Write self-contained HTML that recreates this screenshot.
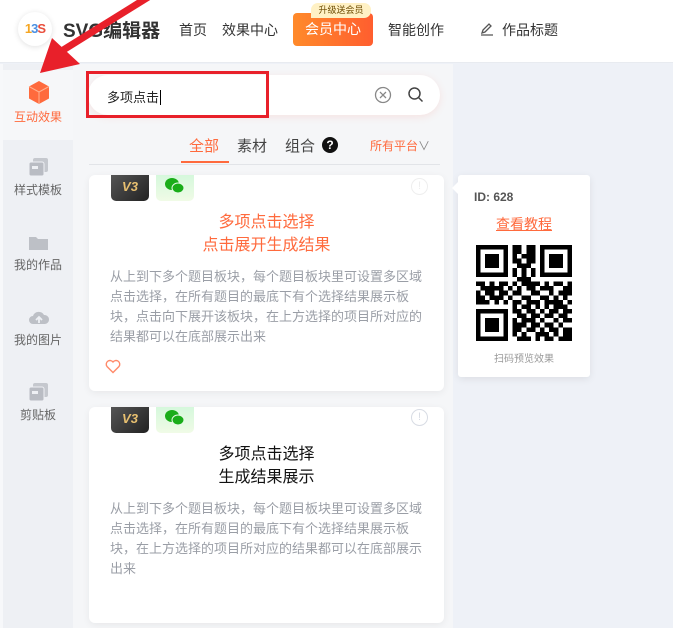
<!DOCTYPE html>
<html><head><meta charset="utf-8"><style>
*{margin:0;padding:0;box-sizing:border-box}
body{width:673px;height:628px;overflow:hidden;position:relative;background:#eef1f7;font-family:"Liberation Sans","Noto Sans CJK SC",sans-serif;}
.a{position:absolute}
.hdr{left:0;top:0;width:673px;height:63px;background:#fff;border-bottom:1px solid #e8ebf0}
.nav{top:20px;font-size:14px;color:#333}
.side{left:0;top:64px;width:73px;height:564px;background:#eef0f4;border-left:3px solid #f7f8fa}
.si{width:70px;text-align:center;font-size:12px;color:#666}
.panel{left:73px;top:64px;width:380px;height:564px;background:#f5f6f8}
.card{background:#fff;border-radius:6px;box-shadow:0 2px 8px rgba(0,0,0,.06)}
.desc{font-size:13px;line-height:20px;color:#9a9ea6;width:320px;letter-spacing:0}
</style></head><body>
<div class="a hdr"></div>
<div class="a" style="left:18px;top:12px;width:34px;height:34px;border-radius:50%;background:#fff;box-shadow:0 1px 6px rgba(0,0,0,.12);font-size:13px;font-weight:bold;line-height:34px;text-align:center;letter-spacing:-1px"><span style="color:#f5a623">1</span><span style="color:#4a90e2">3</span><span style="color:#e94e3c">S</span></div>
<div class="a" style="left:63px;top:16px;font-size:19px;font-weight:bold;color:#333">SVG编辑器</div>
<div class="a nav" style="left:179px">首页</div>
<div class="a nav" style="left:222px">效果中心</div>
<div class="a" style="left:293px;top:13px;width:80px;height:33px;border-radius:4px;background:linear-gradient(90deg,#ff8a2a,#ff5e2f);color:#fff;font-size:14px;text-align:center;line-height:33px">会员中心</div>
<div class="a" style="left:311px;top:3px;width:60px;height:15px;border-radius:7px 7px 7px 0;background:#fff1c4;color:#6b4a00;font-size:9px;text-align:center;line-height:15px">升级送会员</div>
<div class="a nav" style="left:388px">智能创作</div>
<svg class="a" style="left:479px;top:21px" width="16" height="16" viewBox="0 0 16 16"><path d="M3 12l1-3 6-6 2 2-6 6z M2 14h12" fill="none" stroke="#555" stroke-width="1.3"/></svg>
<div class="a nav" style="left:502px">作品标题</div>

<div class="a side"></div>
<div class="a" style="left:3px;top:70px;width:70px;height:70px;background:#f6f7f9"></div>
<svg class="a" style="left:27px;top:80px" width="24" height="26" viewBox="0 0 24 26"><path d="M12 1l10 5.5v12L12 24 2 18.5v-12z" fill="#ff6a3d"/><path d="M2 6.5L12 12l10-5.5M12 12v12" fill="none" stroke="#ffb08f" stroke-width="1"/></svg>
<div class="a si" style="left:3px;top:108px;color:#ff6a3d">互动效果</div>
<svg class="a" style="left:28px;top:157px" width="22" height="22"><rect x="5" y="1" width="15" height="14" rx="2" fill="#c5c8ce"/><rect x="1" y="5" width="15" height="14" rx="2" fill="#b9bcc3" stroke="#eef0f4"/><rect x="4" y="9" width="6" height="3" fill="#eef0f4"/></svg>
<div class="a si" style="left:3px;top:181px">样式模板</div>
<svg class="a" style="left:28px;top:234px" width="22" height="18"><path d="M1 3h7l2 2h10v11H1z" fill="#bdc0c6"/></svg>
<div class="a si" style="left:3px;top:256px">我的作品</div>
<svg class="a" style="left:28px;top:308px" width="22" height="18"><path d="M5 16a4 4 0 010-8 6 6 0 0111-1 4.5 4.5 0 011 9z" fill="#bdc0c6"/><path d="M11 15V9m-3 3l3-3 3 3" stroke="#eef0f4" stroke-width="1.8" fill="none"/></svg>
<div class="a si" style="left:3px;top:331px">我的图片</div>
<svg class="a" style="left:28px;top:382px" width="22" height="22"><rect x="5" y="1" width="15" height="14" rx="2" fill="#c5c8ce"/><rect x="1" y="5" width="15" height="14" rx="2" fill="#b9bcc3" stroke="#eef0f4"/><rect x="4" y="9" width="6" height="3" fill="#eef0f4"/></svg>
<div class="a si" style="left:3px;top:406px">剪贴板</div>

<div class="a panel"></div>
<div class="a" style="left:88px;top:75px;width:352px;height:40px;border-radius:20px;background:#fff;box-shadow:0 2px 8px rgba(255,120,100,.15)"></div>
<div class="a" style="left:86px;top:71px;width:183px;height:47px;border:3px solid #e8202a"></div>
<div class="a" style="left:107px;top:87px;font-size:13px;color:#222">多项点击<span style="border-left:1px solid #000;margin-left:1px"></span></div>
<svg class="a" style="left:374px;top:86px" width="18" height="18"><circle cx="9" cy="9" r="7.5" fill="none" stroke="#888" stroke-width="1.3"/><path d="M6 6l6 6M12 6l-6 6" stroke="#888" stroke-width="1.3"/></svg>
<svg class="a" style="left:407px;top:86px" width="18" height="18"><circle cx="7.5" cy="7.5" r="5.5" fill="none" stroke="#444" stroke-width="1.5"/><path d="M11.5 11.5l4 4" stroke="#444" stroke-width="1.5"/></svg>
<div class="a" style="left:189px;top:135px;font-size:15px;color:#ff6a3d">全部</div>
<div class="a" style="left:181px;top:161px;width:48px;height:2px;background:#ff6a3d"></div>
<div class="a" style="left:237px;top:135px;font-size:15px;color:#444">素材</div>
<div class="a" style="left:285px;top:135px;font-size:15px;color:#444">组合</div>
<div class="a" style="left:322px;top:137px;width:16px;height:16px;border-radius:50%;background:#111;color:#fff;font-size:12px;font-weight:bold;text-align:center;line-height:16px">?</div>
<div class="a" style="left:370px;top:137px;font-size:12px;color:#ff6a3d">所有平台<span style="color:#888">∨</span></div>
<div class="a" style="left:89px;top:164px;width:351px;height:1px;background:#e2e4e8"></div>

<div class="a card" style="left:89px;top:175px;width:355px;height:216px"></div>
<div class="a card" style="left:89px;top:407px;width:355px;height:216px"></div>

<div class="a" style="left:111px;top:175px;width:38px;height:26px;border-radius:0 0 5px 5px;background:linear-gradient(135deg,#555,#222);color:#e8c070;font-weight:bold;font-style:italic;font-size:13px;text-align:center;line-height:24px">V3</div>
<div class="a" style="left:156px;top:175px;width:38px;height:26px;border-radius:0 0 5px 5px;background:linear-gradient(#d5f8dc,#f0fbe6);text-align:center"><svg width="26" height="22" viewBox="0 0 26 22"><ellipse cx="10" cy="9" rx="7" ry="6" fill="#1aad19"/><ellipse cx="16" cy="13" rx="6" ry="5" fill="#1aad19" stroke="#e6fae6"/></svg></div>
<div class="a" style="left:411px;top:178px;width:17px;height:17px;border-radius:50%;border:1.5px solid #eee;color:#eee;font-size:11px;text-align:center;line-height:14px">!</div>
<div class="a" style="left:89px;top:211px;width:355px;text-align:center;font-size:16px;line-height:23px;color:#ff6a3d">多项点击选择<br>点击展开生成结果</div>
<div class="a desc" style="left:110px;top:267px">从上到下多个题目板块，每个题目板块里可设置多区域点击选择，在所有题目的最底下有个选择结果展示板块，点击向下展开该板块，在上方选择的项目所对应的结果都可以在底部展示出来</div>
<svg class="a" style="left:105px;top:359px" width="16" height="15" viewBox="0 0 16 15"><path d="M8 13.5L2 7.5A3.3 3.3 0 018 3a3.3 3.3 0 016 4.5z" fill="none" stroke="#ff8a6a" stroke-width="1.4"/></svg>

<div class="a" style="left:111px;top:407px;width:38px;height:26px;border-radius:0 0 5px 5px;background:linear-gradient(135deg,#555,#222);color:#e8c070;font-weight:bold;font-style:italic;font-size:13px;text-align:center;line-height:24px">V3</div>
<div class="a" style="left:156px;top:407px;width:38px;height:26px;border-radius:0 0 5px 5px;background:linear-gradient(#d5f8dc,#f0fbe6);text-align:center"><svg width="26" height="22" viewBox="0 0 26 22"><ellipse cx="10" cy="9" rx="7" ry="6" fill="#1aad19"/><ellipse cx="16" cy="13" rx="6" ry="5" fill="#1aad19" stroke="#e6fae6"/></svg></div>
<div class="a" style="left:411px;top:409px;width:17px;height:17px;border-radius:50%;border:1.5px solid #d8dce4;color:#d8dce4;font-size:11px;text-align:center;line-height:14px">!</div>
<div class="a" style="left:89px;top:443px;width:355px;text-align:center;font-size:16px;line-height:23px;color:#111">多项点击选择<br>生成结果展示</div>
<div class="a desc" style="left:110px;top:499px">从上到下多个题目板块，每个题目板块里可设置多区域点击选择，在所有题目的最底下有个选择结果展示板块，在上方选择的项目所对应的结果都可以在底部展示出来</div>

<div class="a" style="left:458px;top:175px;width:132px;height:202px;background:#fff;border-radius:3px;box-shadow:0 2px 8px rgba(0,0,0,.08)"></div>
<div class="a" style="left:452px;top:182px;width:0;height:0;border:6px solid transparent;border-right-color:#fff;border-left:0"></div>
<div class="a" style="left:474px;top:190px;font-size:12px;font-weight:bold;color:#555">ID: 628</div>
<div class="a" style="left:496px;top:214px;font-size:14px;color:#ff6a3d;text-decoration:underline">查看教程</div>
<svg class="a" style="left:476px;top:245px" width="96" height="96" viewBox="0 0 21 21" shape-rendering="crispEdges"><g fill="#000">
<path fill-rule="evenodd" d="M0 0h7v7h-7zM1 1v5h5v-5zM2 2h3v3h-3zM14 0h7v7h-7zM15 1v5h5v-5zM16 2h3v3h-3zM0 14h7v7h-7zM1 15v5h5v-5zM2 16h3v3h-3z"/>
<path d="M8 0h2v1h-2zM11 0h2v1h-2zM8 1h2v1h-2zM11 1h2v1h-2zM8 2h1v1h-1zM10 2h3v1h-3zM8 3h2v1h-2zM11 3h2v1h-2zM9 4h3v1h-3zM8 5h1v1h-1zM10 5h1v1h-1zM12 5h1v1h-1zM8 6h1v1h-1zM10 6h1v1h-1zM12 6h1v1h-1zM9 7h3v1h-3z
M0 8h2v1h-2zM3 8h1v1h-1zM5 8h2v1h-2zM8 8h1v1h-1zM10 8h4v1h-4zM15 8h1v1h-1zM17 8h2v1h-2zM20 8h1v1h-1z
M1 9h3v1h-3zM4 9h2v1h-2zM7 9h1v1h-1zM9 9h1v1h-1zM11 9h2v1h-2zM14 9h3v1h-3zM19 9h2v1h-2z
M0 10h1v1h-1zM2 10h2v1h-2zM5 10h2v1h-2zM8 10h2v1h-2zM12 10h2v1h-2zM16 10h1v1h-1zM18 10h3v1h-3z
M0 11h2v1h-2zM3 11h3v1h-3zM7 11h1v1h-1zM10 11h2v1h-2zM14 11h2v1h-2zM17 11h1v1h-1zM19 11h1v1h-1z
M0 12h3v1h-3zM4 12h1v1h-1zM6 12h1v1h-1zM8 12h2v1h-2zM11 12h3v1h-3zM15 12h4v1h-4zM20 12h1v1h-1z
M8 13h1v1h-1zM10 13h2v1h-2zM13 13h1v1h-1zM15 13h1v1h-1zM17 13h3v1h-3z
M8 14h2v1h-2zM11 14h2v1h-2zM14 14h1v1h-1zM16 14h2v1h-2zM19 14h2v1h-2z
M9 15h2v1h-2zM12 15h2v1h-2zM15 15h2v1h-2zM18 15h2v1h-2z
M8 16h1v1h-1zM10 16h3v1h-3zM14 16h1v1h-1zM17 16h1v1h-1zM19 16h2v1h-2z
M8 17h3v1h-3zM12 17h2v1h-2zM15 17h2v1h-2zM18 17h1v1h-1z
M8 18h2v1h-2zM11 18h2v1h-2zM14 18h1v1h-1zM16 18h2v1h-2zM19 18h2v1h-2z
M8 19h1v1h-1zM10 19h1v1h-1zM13 19h3v1h-3zM17 19h1v1h-1zM19 19h2v1h-2z
M9 20h3v1h-3zM13 20h1v1h-1zM15 20h2v1h-2zM18 20h3v1h-3z"/></g></svg>
<div class="a" style="left:458px;top:350px;width:132px;text-align:center;font-size:10px;color:#999">扫码预览效果</div>

<svg class="a" style="left:0;top:0" width="160" height="85"><path d="M150 -4L60 52" stroke="#e8202a" stroke-width="7"/><path d="M40 73L52 38 80 64z" fill="#e8202a"/></svg>
</body></html>
